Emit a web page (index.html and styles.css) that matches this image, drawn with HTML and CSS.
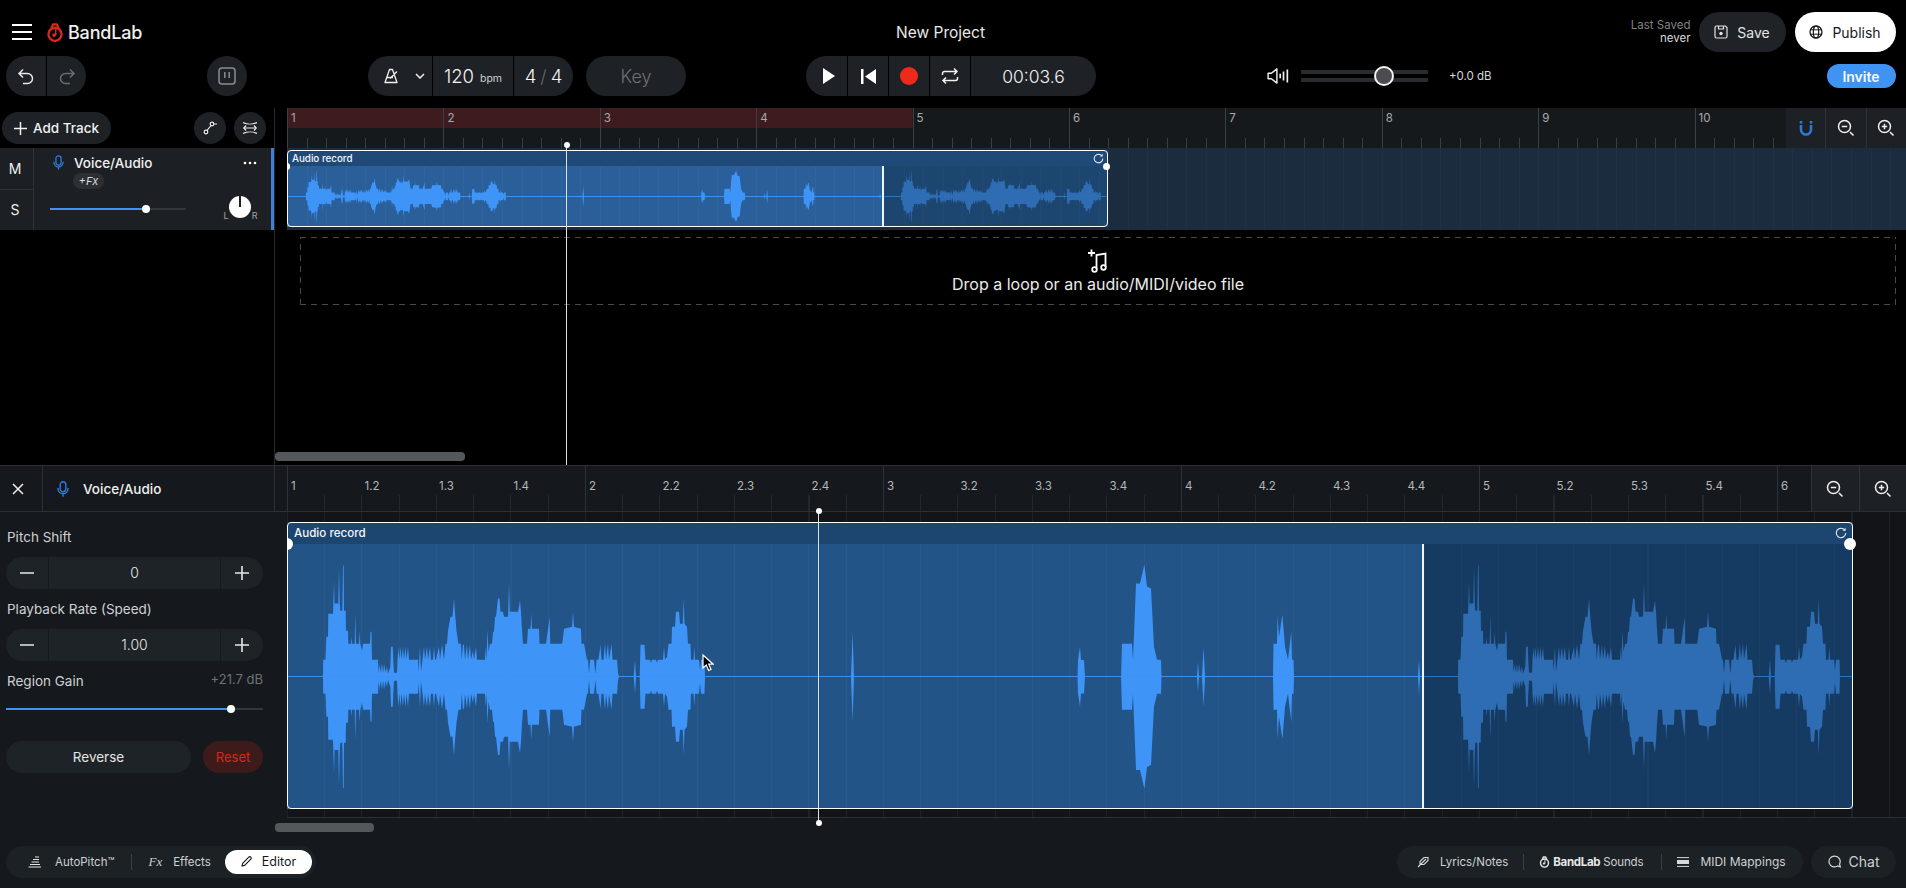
FILE: index.html
```html
<!DOCTYPE html>
<html lang="en">
<head>
<meta charset="utf-8">
<title>BandLab Studio</title>
<link rel="stylesheet" href="styles.css">
</head>
<body>
<svg class="defs" xmlns="http://www.w3.org/2000/svg">
  <symbol id="wave" viewBox="0 -132.5 1135 265" preserveAspectRatio="none">
    <g id="halfwave">
      <polygon points="36,0 36.2,-17 38.5,-17 39.3,-40 41,-40 41.3,-63 46,-63 46.3,-72 47,-96 47.6,-72 48,-73 51.3,-73 52,-110 52.8,-73 53.3,-66 55.3,-66 56,-111 56.7,-111 57,-66 58.7,-66 59,-46 61,-46 61.3,-33 64,-33 64.5,-40 65,-33 67.7,-33 68.3,-63 69,-33 72,-33 72.7,-45 73.3,-33 75,-26 76,-33 83,-33 83.5,-45 84.5,-45 85,-17 91,-17 91.5,-4 92.5,-13 93.3,-4 94.3,-13 95,-4 96,-13 96.8,-4 97.7,-13 98.5,-4 100,-10 101,-3 103.3,-10 104,-30 105.800,-30 106.300,-16 107,-4 110,-4 110.500,-17 111.500,-30 112.300,-17 113.500,-30 114.500,-17 116,-30 117,-17 118.500,-30 119.500,-17 121,-30 122,-17 131,-17 131.500,-5 133,-30 134,-5 135.500,-17 137,-30 138,-17 140,-30 141,-17 143,-30 144,-17 146,-17 147,-30 148,-17 149,-17 152,-30 153,-17 155,-32 157,-17 158.500,-33 160,-33 161,-46 163.500,-60 165.500,-60 167,-78 168.300,-60 169.500,-46 171.500,-33 174,-33 174.700,-17 176,-32 177,-32 178,-17 180,-32 181,-17 183,-32 184,-17 186,-26 187,-17 189,-30 190,-17 198,-17 198.500,-30 199.500,-17 200.500,-47 201.500,-25 203,-33 205,-33 206,-45 207,-45 208,-60 209,-60 211,-78 212.500,-78 213.500,-65 216,-65 217,-60 221,-60 222,-93 222.800,-65 231,-65 233,-76 234,-65 235,-47 236,-33 240,-33 241,-48 243.500,-48 244.300,-63 245,-48 252,-48 252.500,-33 259,-33 262.700,-60 263.200,-33 275,-33 275.500,-35 277,-48 285,-50 286,-65 287,-50 294,-48 294.500,-33 297,-33 300,-17 301,-17 302,-3 303,-17 307,-17 308.500,-3 309.500,-17 311.500,-17 313.500,-32 314.500,-17 316.500,-17 318,-33 319,-17 321,-33 322,-17 324.500,-33 325.500,-17 330,-17 331,-4 332,0 346.700,0 348,-17 349,0 352.700,0 353.500,-32 357.500,-32 358.500,-17 363,-17 364,-14 365,-17 369,-17 370,-14 371,-17 376,-17 377,-30 378,-17 380,-20 381.500,-33 384.500,-33 385,-50 388,-50 389,-65 392,-65 393,-53 395.800,-53 396.700,-78 397.500,-53 400,-50 401,-33 403.500,-33 404,-17 406.500,-17 407.300,-30 408,-17 412,-17 413,-6 414,-17 417.500,-17 418,0"/>
      <polygon points="564,0 565.600,-45 567,0"/>
      <polygon points="790.500,0 791,-16.700 793,-30 794,-16.700 797,-16.700 798,0"/>
      <polygon points="834,0 835,-33 845,-33 846,-17 849,-93 853,-93 857.400,-112 860,-90 864,-88 867,-30 870,-17 874,-17 874.500,0"/>
      <polygon points="910,0 911,-15 912,0"/>
      <polygon points="915,0 916.600,-30 918,0"/>
      <polygon points="986,0 986.500,-33 990,-33 990.500,-62 992,-40 995.400,-62 998,-30 1001,-17 1004.300,-45 1005,-17 1006.500,-17 1007,0"/>
      <polygon points="1131,0 1132,-17 1133,0"/>
    </g>
    <use href="#halfwave" transform="scale(1 -1)"/>
  </symbol>
  <symbol id="mic" viewBox="0 0 12 16">
    <rect x="3.2" y="0.8" width="5.6" height="10" rx="2.8" fill="none" stroke="currentColor" stroke-width="1.4"/>
    <path d="M1 7.5c0 3.2 2.2 5.3 5 5.3s5-2.1 5-5.3M6 12.8v2.4" fill="none" stroke="currentColor" stroke-width="1.4" stroke-linecap="round"/>
  </symbol>
  <symbol id="zoomout" viewBox="0 0 18 18">
    <circle cx="7.5" cy="7.5" r="6" fill="none" stroke="currentColor" stroke-width="1.5"/>
    <path d="M4.8 7.5h5.4M13 13l3.5 3.5" fill="none" stroke="currentColor" stroke-width="1.5"/>
  </symbol>
  <symbol id="zoomin" viewBox="0 0 18 18">
    <circle cx="7.5" cy="7.5" r="6" fill="none" stroke="currentColor" stroke-width="1.5"/>
    <path d="M4.8 7.5h5.4M7.5 4.8v5.4M13 13l3.5 3.5" fill="none" stroke="currentColor" stroke-width="1.5"/>
  </symbol>
  <symbol id="refresh" viewBox="0 0 12 12">
    <path d="M9.8 3.2A4.7 4.7 0 1 0 10.7 6" fill="none" stroke="currentColor" stroke-width="1.1"/>
    <path d="M10.6 0.8v3H7.6z" fill="currentColor"/>
  </symbol>
  <symbol id="minus" viewBox="0 0 14 14"><path d="M0 7h14" stroke="currentColor" stroke-width="1.6"/></symbol>
  <symbol id="plus" viewBox="0 0 14 14"><path d="M0 7h14M7 0v14" stroke="currentColor" stroke-width="1.6"/></symbol>
  <symbol id="logo" viewBox="0 0 20 21">
    <circle cx="10" cy="12.500" r="7.300" fill="none" stroke="currentColor" stroke-width="2.600"/>
    <path d="M5.800 6.600L7.800 1.400h4.400l2 5.200" fill="none" stroke="currentColor" stroke-width="2.400" stroke-linejoin="round"/>
    <path d="M10.800 6v7.400" fill="none" stroke="currentColor" stroke-width="1.600"/>
    <circle cx="9" cy="13.400" r="2.100" fill="currentColor"/>
  </symbol>
</svg>

<div class="app">
  <header class="topbar">
    <svg class="i-burger" viewBox="0 0 20 16"><path d="M0 1h20M0 8h20M0 15h20" stroke="#fff" stroke-width="2"/></svg>
    <svg class="i-logo"><use href="#logo"/></svg>
    <span class="brand">BandLab</span>
    <span class="title">New Project</span>
    <div class="saved"><span class="saved-l">Last Saved</span><span class="saved-v">never</span></div>
    <button class="btn-save">
      <svg class="i-14" viewBox="0 0 14 14"><path d="M2.500 1h9L13 2.500v9a1.500 1.500 0 0 1-1.500 1.500h-9A1.500 1.500 0 0 1 1 11.500v-9A1.500 1.500 0 0 1 2.500 1z" fill="none" stroke="currentColor" stroke-width="1.200"/><path d="M4.500 1v3h5V1" fill="none" stroke="currentColor" stroke-width="1.200"/><circle cx="7" cy="8.500" r="1.700" fill="currentColor"/></svg>
      Save
    </button>
    <button class="btn-publish">
      <svg class="i-14" viewBox="0 0 14 14"><circle cx="7" cy="7" r="6" fill="none" stroke="currentColor" stroke-width="1.300"/><ellipse cx="7" cy="7" rx="2.700" ry="6" fill="none" stroke="currentColor" stroke-width="1.200"/><path d="M1.500 4.800h11M1.500 9.200h11" stroke="currentColor" stroke-width="1"/></svg>
      Publish
    </button>
  </header>

  <div class="toolbar">
    <div class="pill undo">
      <button class="seg s40"><svg class="i-18" viewBox="0 0 18 18"><path d="M6 2.500L2 6.500l4 4M2 6.500h8.500a5 5 0 0 1 0 10H6" fill="none" stroke="#e8e8e8" stroke-width="1.500"/></svg></button>
      <button class="seg s40"><svg class="i-18" viewBox="0 0 18 18"><path d="M12 2.500l4 4-4 4M16 6.500H7.500a5 5 0 0 0 0 10H12" fill="none" stroke="#6a6d70" stroke-width="1.500"/></svg></button>
    </div>
    <button class="pill round40 pause">
      <svg class="i-18" viewBox="0 0 18 18"><rect x="1" y="1" width="16" height="16" rx="3" fill="none" stroke="#8b8e91" stroke-width="1.500"/><path d="M6.800 5v6M11.200 5v6" stroke="#8b8e91" stroke-width="1.500"/></svg>
    </button>
    <div class="pill metro">
      <button class="seg metro-icon">
        <svg class="i-met" viewBox="0 0 16 16"><path d="M6 1.500h3l4.500 13h-12zM3.500 9.500h6M13.500 3.500L6.500 10.500" fill="none" stroke="#f0f0f0" stroke-width="1.300" stroke-linejoin="round"/></svg>
        <svg class="i-chev" viewBox="0 0 10 6"><path d="M1 1l4 4 4-4" fill="none" stroke="#f0f0f0" stroke-width="1.500"/></svg>
      </button>
      <div class="seg bpm"><span class="big">120</span><span class="unit">bpm</span></div>
      <div class="seg sig"><span class="big">4</span><span class="slash">/</span><span class="big">4</span></div>
    </div>
    <button class="pill key">Key</button>
    <div class="pill transport">
      <button class="seg s41 play"><svg class="i-play" viewBox="0 0 12 16"><path d="M0 0l12 8-12 8z" fill="#fff"/></svg></button>
      <button class="seg s41"><svg class="i-prev" viewBox="0 0 15 15"><path d="M0 0h2.500v15H0zM15 0v15L4 7.500z" fill="#fff"/></svg></button>
      <button class="seg s41"><span class="rec"></span></button>
      <button class="seg s41"><svg class="i-18" viewBox="0 0 18 18"><path d="M1.500 8V6.500a2 2 0 0 1 2-2h12M13 1.500l3 3-3 3M16.500 10v1.500a2 2 0 0 1-2 2h-12M5 10.500l-3 3 3 3" fill="none" stroke="#f0f0f0" stroke-width="1.500"/></svg></button>
      <div class="seg time">00:03.6</div>
    </div>
    <svg class="i-vol" viewBox="0 0 20 16"><path d="M1 5.500h3L9 1.500v13l-5-4H1z" fill="none" stroke="#f0f0f0" stroke-width="1.300" stroke-linejoin="round"/><path d="M12 6v4M15 4v8M18.500 2v12" stroke="#f0f0f0" stroke-width="1.500"/></svg>
    <div class="volume"><span class="vbar"></span><span class="vbar"></span><span class="vthumb"></span></div>
    <span class="db">+0.0 dB</span>
    <button class="btn-invite">Invite</button>
  </div>

  <section class="arrange">
    <aside class="trackcol">
      <div class="trackbar">
        <button class="add"><svg class="i-plus"><use href="#plus"/></svg>Add Track</button>
        <button class="round32 first"><svg class="i-14" viewBox="0 0 14 14"><circle cx="3" cy="11" r="1.800" fill="none" stroke="#eee" stroke-width="1.200"/><circle cx="9" cy="3" r="1.800" fill="none" stroke="#eee" stroke-width="1.200"/><path d="M4 9.500L8 4.500M10.800 3H14" stroke="#eee" stroke-width="1.200"/></svg></button>
        <button class="round32"><svg class="i-14" viewBox="0 0 14 14"><path d="M0 1.500c4 2 10 2 14 0M0 12.500c4-2 10-2 14 0M1 7h12" fill="none" stroke="#eee" stroke-width="1.200"/><path d="M3 4.500L.8 7 3 9.500M11 4.500L13.200 7 11 9.500" fill="none" stroke="#eee" stroke-width="1.200"/></svg></button>
      </div>
      <div class="track">
        <div class="ms"><button class="ms-b">M</button><button class="ms-b">S</button></div>
        <div class="track-main">
          <div class="track-head">
            <svg class="i-mic"><use href="#mic"/></svg>
            <span class="track-name">Voice/Audio</span>
            <svg class="i-dots" viewBox="0 0 14 4"><circle cx="2" cy="2" r="1.300" fill="#fff"/><circle cx="7" cy="2" r="1.300" fill="#fff"/><circle cx="12" cy="2" r="1.300" fill="#fff"/></svg>
          </div>
          <span class="fx-chip">+Fx</span>
          <div class="track-ctl">
            <div class="slider tslider"><span class="fill fill-track"></span><span class="thumb"></span></div>
            <div class="knob">
              <span class="knob-dial"></span>
              <span class="knob-l">L</span>
              <span class="knob-r">R</span>
            </div>
          </div>
        </div>
      </div>
    </aside>

    <div class="timeline">
      <div class="ruler">
        <div class="bars">
          <span class="bar">1</span><span class="bar">2</span><span class="bar">3</span><span class="bar">4</span><span class="bar">5</span><span class="bar">6</span><span class="bar">7</span><span class="bar">8</span><span class="bar">9</span><span class="bar">10</span>
        </div>
        <div class="tools">
          <button class="tool"><svg class="i-mag" viewBox="0 0 14 16"><path d="M2 5v4.500a5 5 0 0 0 10 0V5" fill="none" stroke="#2f78d2" stroke-width="2.600"/><path d="M.7 1h2.600v2.500H.7zM10.700 1h2.600v2.500h-2.600z" fill="#2f78d2"/></svg></button>
          <button class="tool"><svg class="i-18"><use href="#zoomout"/></svg></button>
          <button class="tool"><svg class="i-18"><use href="#zoomin"/></svg></button>
        </div>
      </div>
      <div class="lane">
        <div class="clip clip-top">
          <div class="clip-head"><span>Audio record</span><svg class="i-ref"><use href="#refresh"/></svg></div>
          <div class="clip-body">
            <div class="seg-a"><svg class="wave"><use href="#wave" width="100%" height="100%"/></svg></div>
            <div class="seg-b"><svg class="wave"><use href="#wave" width="100%" height="100%"/></svg></div>
          </div>
          <span class="handle-l"></span><span class="handle-r"></span>
        </div>
      </div>
      <div class="drop">
        <svg class="i-note" viewBox="0 0 24 24"><path d="M2 4h7M5.500 .5v7" stroke="#fff" stroke-width="1.800"/><path d="M10.500 20V6l9-1.500V18" fill="none" stroke="#fff" stroke-width="1.800"/><circle cx="8.500" cy="20.500" r="2.300" fill="none" stroke="#fff" stroke-width="1.800"/><circle cx="17.500" cy="18.500" r="2.300" fill="none" stroke="#fff" stroke-width="1.800"/></svg>
        <span>Drop a loop or an audio/MIDI/video file</span>
      </div>
      <div class="scroll scroll-top"></div>
    </div>
    <div class="playhead ph-top"></div>
  </section>

  <section class="editor">
    <div class="ed-head">
      <button class="ed-close"><svg class="i-x" viewBox="0 0 12 12"><path d="M1 1l10 10M11 1L1 11" stroke="#eee" stroke-width="1.500"/></svg></button>
      <div class="ed-name"><svg class="i-mic2"><use href="#mic"/></svg><span>Voice/Audio</span></div>
      <div class="beats">
        <span class="beat">1</span><span class="beat">1.2</span><span class="beat">1.3</span><span class="beat">1.4</span><span class="beat">2</span><span class="beat">2.2</span><span class="beat">2.3</span><span class="beat">2.4</span><span class="beat">3</span><span class="beat">3.2</span><span class="beat">3.3</span><span class="beat">3.4</span><span class="beat">4</span><span class="beat">4.2</span><span class="beat">4.3</span><span class="beat">4.4</span><span class="beat">5</span><span class="beat">5.2</span><span class="beat">5.3</span><span class="beat">5.4</span><span class="beat">6</span>
      </div>
      <div class="ed-tools">
        <button class="ed-tool"><svg class="i-18"><use href="#zoomout"/></svg></button>
        <button class="ed-tool"><svg class="i-18"><use href="#zoomin"/></svg></button>
      </div>
    </div>
    <div class="ed-body">
      <aside class="ed-side">
        <label class="lbl">Pitch Shift</label>
        <div class="stepper">
          <button class="st-b"><svg class="i-st"><use href="#minus"/></svg></button>
          <span class="st-v">0</span>
          <button class="st-b"><svg class="i-st"><use href="#plus"/></svg></button>
        </div>
        <label class="lbl">Playback Rate (Speed)</label>
        <div class="stepper">
          <button class="st-b"><svg class="i-st"><use href="#minus"/></svg></button>
          <span class="st-v">1.00</span>
          <button class="st-b"><svg class="i-st"><use href="#plus"/></svg></button>
        </div>
        <div class="gain-row"><label class="lbl">Region Gain</label><span class="gain-v">+21.7 dB</span></div>
        <div class="slider gslider"><span class="fill fill-gain"></span><span class="thumb"></span></div>
        <div class="side-btns">
          <button class="reverse">Reverse</button>
          <button class="reset">Reset</button>
        </div>
      </aside>
      <div class="ed-lane">
        <div class="clip clip-bot">
          <div class="clip-head"><span>Audio record</span><svg class="i-ref"><use href="#refresh"/></svg></div>
          <div class="clip-body">
            <div class="seg-a"><svg class="wave"><use href="#wave" width="100%" height="100%"/></svg></div>
            <div class="seg-b"><svg class="wave"><use href="#wave" width="100%" height="100%"/></svg></div>
          </div>
          <span class="handle-l"></span><span class="handle-r"></span>
        </div>
      </div>
    </div>
    <div class="scroll scroll-bot"></div>
    <footer class="ed-foot">
      <div class="fpill fleft">
        <button class="ftab t-auto"><svg class="i-auto" viewBox="0 0 14 12"><path d="M7 1h4M5 3.500h6M3.500 6H11M2 8.500h10M.5 11H13" stroke="#e4e4e4" stroke-width="1.200"/></svg>AutoPitch™</button>
        <span class="fdiv"></span>
        <button class="ftab t-fx"><i class="fx">Fx</i>Effects</button>
        <button class="ftab t-edit"><svg class="i-pen" viewBox="0 0 12 12"><path d="M1 11l.8-3L8.500 1.300a1.400 1.400 0 0 1 2.200 2.200L4 10.200z" fill="none" stroke="#111" stroke-width="1.200" stroke-linejoin="round"/></svg>Editor</button>
      </div>
      <div class="fpill fright">
        <button class="ftab t-lyr"><svg class="i-12" viewBox="0 0 12 12"><path d="M1 11L9 3M3 9V5.500L7 1.500h4v3L7 8.500H3.500" fill="none" stroke="#d8d8d8" stroke-width="1.100"/></svg>Lyrics/Notes</button>
        <span class="fdiv d2"></span>
        <button class="ftab t-snd"><svg class="i-12b"><use href="#logo"/></svg><b>BandLab</b>Sounds</button>
        <span class="fdiv d3"></span>
        <button class="ftab t-midi"><svg class="i-midi" viewBox="0 0 12 10"><path d="M0 .6h12M0 9.400h12" stroke="#d8d8d8" stroke-width="1"/><rect x="0" y="3" width="12" height="4" fill="#d8d8d8"/></svg>MIDI Mappings</button>
      </div>
      <button class="fpill fchat"><svg class="i-chat" viewBox="0 0 12 12"><path d="M6 1a5 5 0 1 0 2.800 9.100L11.500 11l-.9-2.600A5 5 0 0 0 6 1z" fill="none" stroke="#d8d8d8" stroke-width="1.100"/></svg>Chat</button>
    </footer>
    <div class="playhead ph-bot"></div>
    <svg class="cursor" viewBox="0 0 12 18"><path d="M1 1v13l3.300-3 2.300 5.500 2.400-1-2.300-5.300h4.500z" fill="#000" stroke="#fff" stroke-width="1.200"/></svg>
  </section>
</div>
</body>
</html>
```

FILE: styles.css
```css
* { box-sizing: border-box; }
html, body { margin: 0; height: 100%; background: #000; }
body { font-family: "Inter", "Lato", "Liberation Sans", sans-serif; color: #f0f0f0; overflow: hidden; }
button { font: inherit; color: inherit; background: none; border: 0; padding: 0; display: flex; align-items: center; justify-content: center; }
svg { display: block; flex: none; }
.defs { display: none; }

.app { width: 1906px; height: 888px; display: flex; flex-direction: column; overflow: hidden; }

/* top bar */
.topbar { height: 56px; display: flex; align-items: center; padding: 8px 10.5px 0 12px; }
.i-burger { width: 20px; height: 16px; }
.i-logo { width: 18px; height: 19px; margin-left: 14px; color: #d9291c; }
.brand { font-size: 18px; font-weight: 500; margin-left: 4px; width: 76px; letter-spacing: -.2px; }
.title { margin-left: 752px; font-size: 15.5px; color: #e8e8e8; width: 92px; white-space: nowrap; }
.saved { margin-left: auto; display: flex; flex-direction: column; align-items: flex-end; font-size: 11.5px; line-height: 13px; }
.saved-l { color: #808386; }
.saved-v { color: #d8d8d8; }
.btn-save, .btn-publish { height: 40px; border-radius: 20px; gap: 9px; font-size: 14px; }
.btn-save { width: 87px; margin-left: 8px; background: #1f2327; color: #e4e4e4; }
.btn-publish { width: 101px; margin-left: 9px; background: #fff; color: #16181b; }
.i-14 { width: 14px; height: 14px; }

/* toolbar */
.toolbar { height: 52px; padding-bottom: 12px; display: flex; align-items: center; padding-left: 6px; padding-right: 10.5px; }
.pill { height: 40px; background: #1e2226; border-radius: 20px; display: flex; align-items: stretch; overflow: hidden; }
.seg { display: flex; align-items: center; justify-content: center; border-left: 1px solid #000; }
.seg:first-child { border-left: 0; }
.s40 { width: 40px; }
.s41 { width: 41px; }
.play { padding-left: 5px; }
.i-18 { width: 18px; height: 18px; color: #f0f0f0; }
.round40 { width: 40px; align-items: center; }
.pause { margin-left: 121px; }
.metro { margin-left: 121px; width: 205px; }
.metro-icon { width: 64px; gap: 15px; padding-left: 8px; }
.i-met { width: 17px; height: 16px; }
.i-chev { width: 10px; height: 6px; }
.bpm { width: 81px; gap: 6px; align-items: center; }
.big { font-size: 18.5px; font-weight: 300; color: #f4f4f4; }
.unit { font-size: 10.5px; color: #d0d0d0; margin-top: 4px; }
.sig { flex: 1; gap: 4px; }
.slash { color: #666; font-size: 18px; font-weight: 300; }
.key { width: 100px; margin-left: 13px; align-items: center; justify-content: center; color: #6e7174; font-size: 18px; font-weight: 300; }
.transport { margin-left: 120px; width: 290px; }
.i-play { width: 12px; height: 16px; }
.i-prev { width: 15px; height: 15px; }
.rec { width: 18px; height: 18px; border-radius: 50%; background: #ee2a1b; }
.time { flex: 1; font-size: 17.5px; font-weight: 300; color: #f4f4f4; }
.i-vol { width: 22px; height: 18px; margin-left: 171px; }
.volume { position: relative; width: 127px; height: 12px; margin-left: 12px; display: flex; flex-direction: column; justify-content: space-between; }
.vbar { height: 4px; background: #2a2d30; border-radius: 1px; }
.vthumb { position: absolute; left: 73px; top: -4px; width: 20px; height: 20px; border-radius: 50%; background: #4a4c4f; border: 2px solid #f4f4f4; }
.db { font-size: 11.5px; margin-left: 21px; color: #d8d8d8; white-space: nowrap; }
.btn-invite { margin-left: auto; width: 69px; height: 24px; border-radius: 12px; background: #3f93f3; color: #f4f8ff; font-size: 14px; font-weight: 600; }

/* arrange */
.arrange { position: relative; height: 357px; display: flex; }
.trackcol { width: 275px; flex: none; border-right: 1px solid #26292d; }
.trackbar { height: 40px; display: flex; align-items: center; padding-left: 2px; }
.add { width: 109px; height: 32px; border-radius: 16px; background: #1e2226; font-size: 13.5px; font-weight: 500; gap: 6px; white-space: nowrap; margin-right: 83px; }
.i-plus { width: 13px; height: 13px; color: #f0f0f0; }
.round32 { width: 32px; height: 32px; border-radius: 50%; background: #1e2226; margin-right: 8px; }
.track { height: 82px; display: flex; background: #1c2024; border-right: 3px solid #3f7fd4; width: 274px; }
.ms { width: 34px; border-right: 1px solid #2f3337; display: flex; flex-direction: column; }
.ms-b { flex: 1; font-size: 14px; font-weight: 400; color: #f0f0f0; padding-right: 3px; }
.ms-b:first-child { border-bottom: 1px solid #2f3337; }
.track-main { flex: 1; padding: 6px 14px 0 16px; }
.track-head { display: flex; align-items: center; height: 17px; }
.i-mic { width: 11px; height: 15px; margin-left: 3px; color: #2f7cdc; }
.track-name { font-size: 13.5px; font-weight: 500; margin-left: 10px; white-space: nowrap; }
.i-dots { width: 14px; height: 4px; margin-left: auto; }
.fx-chip { display: block; width: 31px; height: 16px; margin: 2px 0 0 23px; border-radius: 8px; background: #2c3034; font-size: 11px; font-style: italic; line-height: 16px; text-align: center; color: #d8d8d8; }
.track-ctl { display: flex; align-items: center; margin-top: 7px; }
.slider { position: relative; height: 2px; background: #34373b; border-radius: 1px; }
.fill { display: block; height: 100%; background: #3f93f3; }
.thumb { position: absolute; top: -3px; width: 8px; height: 8px; border-radius: 50%; background: #fff; }
.tslider { width: 136px; }
.fill-track { width: 96px; }
.tslider .thumb { left: 92px; }
.knob { position: relative; width: 32px; height: 26px; margin-left: 37.5px; }
.knob-dial { position: absolute; left: 5px; top: 0; width: 22px; height: 22px; border-radius: 50%; background: #fff; }
.knob-dial::after { content: ""; position: absolute; left: 10px; top: 0; width: 2px; height: 11px; background: #1c2024; }
.knob-l, .knob-r { position: absolute; top: 14px; font-size: 9px; color: #a0a3a6; }
.knob-l { left: 0; }
.knob-r { right: -2px; }

.timeline { flex: 1; min-width: 0; display: flex; flex-direction: column; }
.ruler { height: 40px; display: flex; margin-left: 12px; }
.bars { flex: 1; display: flex; overflow: hidden; background:
  linear-gradient(#3e1b1e, #3e1b1e) 0 0 / 625.6px 20px no-repeat,
  repeating-linear-gradient(90deg, #3a3d41 0 1px, transparent 1px 19.55px) 0 100% / 100% 10px no-repeat,
  #16191c; }
.bar { flex: none; width: 156.4px; padding: 3px 0 0 3px; font-size: 11.5px; line-height: 14px; color: #a8abad; border-left: 1px solid #3c3f43; }
.tools { width: 120px; display: flex; background: #1d2125; flex: none; }
.tool { flex: 1; border-left: 1px solid #2e3236; color: #f0f0f0; }
.tool:first-child { border-left: 0; }
.i-mag { width: 14px; height: 16px; }
.lane { height: 82px; margin-left: 12px; padding-top: 2px; background:
  repeating-linear-gradient(90deg, rgba(255,255,255,.025) 0 1px, transparent 1px 19.55px),
  #1a2c3d; }

/* clips */
.clip { position: relative; display: flex; flex-direction: column; }
.clip::after { content: ""; position: absolute; inset: 0; border: 1.5px solid #fff; border-radius: 4px; pointer-events: none; }
.clip-head { display: flex; align-items: center; justify-content: space-between; background: #1f4a78; border-radius: 4px 4px 0 0; color: #f4f6f8; white-space: nowrap; }
.clip-body { flex: 1; min-height: 0; display: flex; }
.seg-a { overflow: hidden; color: #3f94f8; background-color: #235589; background-image:
  repeating-linear-gradient(90deg, rgba(255,255,255,.03) 0 1px, transparent 1px var(--step)),
  linear-gradient(#3a8ff0, #3a8ff0); }
.seg-b { overflow: hidden; flex: 1; color: #2e6db3; border-left: 2px solid #f0f4f8; background-color: #163b62; background-image:
  repeating-linear-gradient(90deg, rgba(255,255,255,.025) 0 1px, transparent 1px var(--step)),
  linear-gradient(#2f72bd, #2f72bd); }
.seg-a, .seg-b { background-repeat: repeat, no-repeat; background-position: 0 0, 0 50%; background-size: auto, 100% 1px; }
.seg-b .wave { margin-left: -2px; }
.wave { height: 100%; fill: currentColor; }
.handle-l, .handle-r { position: absolute; background: #fff; z-index: 1; }

.clip-top { --step: 19.55px; width: 820.7px; height: 76.7px; }
.clip-top .clip-head { height: 16px; padding: 0 4px 0 5px; font-size: 9.8px; font-weight: 500; }
.clip-top .seg-a { width: 594.6px; background-color: #2a5f9a; }
.clip-top .seg-b { background-color: #1c4570; }
.clip-top .wave { width: 594.6px; }
.i-ref { width: 11px; height: 11px; color: #e8eef4; }
.clip-top .handle-l { left: 0; top: 12.5px; width: 3px; height: 7px; border-radius: 0 4px 4px 0; }
.clip-top .handle-r { right: -2px; top: 12.5px; width: 7px; height: 7px; border-radius: 50%; }

.drop { height: 68px; margin: 6.5px 10px 0 25px; display: flex; flex-direction: column; align-items: center; padding-top: 12px; font-size: 16px; color: #ececec; background:
  repeating-linear-gradient(90deg, #474a4d 0 6px, transparent 6px 11px) 0 0 / 100% 1px no-repeat,
  repeating-linear-gradient(90deg, #474a4d 0 6px, transparent 6px 11px) 0 100% / 100% 1px no-repeat,
  repeating-linear-gradient(0deg, #474a4d 0 6px, transparent 6px 11px) 0 0 / 1px 100% no-repeat,
  repeating-linear-gradient(0deg, #474a4d 0 6px, transparent 6px 11px) 100% 0 / 1px 100% no-repeat; }
.i-note { width: 24px; height: 24px; margin-bottom: 1px; }
.scroll { background: #55585b; border-radius: 4px; height: 9px; }
.scroll-top { width: 190px; margin-top: auto; margin-bottom: 4.5px; }

.playhead { position: absolute; width: 1px; background: #dfe2e4; z-index: 3; }
.playhead::before, .playhead.ph-bot::after { content: ""; position: absolute; left: -2.5px; width: 6px; height: 6px; border-radius: 50%; background: #fff; }
.playhead::before { top: -3px; }
.ph-top { left: 566px; top: 37px; bottom: 0; }

/* editor */
.editor { position: relative; height: 423px; background: #15181c; border-top: 1px solid #2c2f33; display: flex; flex-direction: column; }
.ed-head { height: 46.3px; flex: none; display: flex; border-bottom: 1px solid #2c2f33; }
.ed-close { width: 43px; border-right: 1px solid #2c2f33; padding-right: 6px; }
.i-x { width: 12px; height: 12px; }
.ed-name { width: 232px; border-right: 1px solid #2c2f33; display: flex; align-items: center; font-size: 13.5px; font-weight: 500; padding-left: 14px; gap: 14px; white-space: nowrap; }
.i-mic2 { width: 12px; height: 16px; color: #2f7cdc; }
.beats { flex: 1; display: flex; overflow: hidden; margin-left: 12px; min-width: 0; background:
  repeating-linear-gradient(90deg, #24272b 0 1px, transparent 1px 37.25px) 0 100% / 100% 16px no-repeat; }
.beat { flex: none; width: 74.5px; padding: 13px 0 0 3px; font-size: 11.5px; line-height: 14px; color: #b6b9bb; }
.beat:nth-child(4n+1) { border-left: 1px solid #2e3135; }
.ed-tools { width: 95px; flex: none; display: flex; background: #1d2125; }
.ed-tool { flex: 1; border-left: 1px solid #2e3236; color: #f0f0f0; }
.ed-body { height: 306px; flex: none; display: flex; }
.ed-side { width: 287px; flex: none; padding: 17px 24px 0 6px; }
.lbl { display: block; font-size: 13.5px; line-height: 16px; color: #d0d2d4; padding-left: 1px; }
.stepper { height: 32px; margin: 12px 0; background: #1e2327; border-radius: 16px; display: flex; overflow: hidden; }
.st-b { width: 42px; flex: none; }
.st-v { flex: 1; border: solid #15181c; border-width: 0 1px; text-align: center; line-height: 32px; font-size: 14px; font-weight: 300; color: #e8e8e8; }
.i-st { width: 14px; height: 14px; color: #e8e8e8; }
.gain-row { display: flex; justify-content: space-between; }
.gain-v { font-size: 13px; line-height: 12px; color: #6f7275; }
.gslider { margin-top: 19px; }
.fill-gain { width: 225px; }
.gslider .thumb { left: 221px; }
.side-btns { display: flex; gap: 12px; margin-top: 31px; }
.reverse { flex: 1; height: 32px; border-radius: 16px; background: #1e2327; font-size: 13.5px; color: #e4e4e4; }
.reset { width: 60px; height: 32px; border-radius: 16px; background: #3d1b1b; font-size: 13px; color: #cf2c1e; }
.ed-lane { flex: 1; min-width: 0; padding-top: 10px; border-bottom: 1px solid #2c2f33; background:
  repeating-linear-gradient(90deg, #1e2125 0 1px, transparent 1px 37.25px),
  #121417; }
.clip-bot { --step: 37.25px; width: 1565.5px; height: 287px; }
.clip-bot .clip-head { height: 21.5px; padding: 0 6px 0 7px; font-size: 11.6px; font-weight: 500; background: #1c4570; }
.clip-bot .seg-a { width: 1135px; background-color: #225488; }
.clip-bot .wave { width: 1135px; }
.clip-bot .i-ref { width: 12px; height: 12px; }
.clip-bot .handle-l { left: 0; top: 15.5px; width: 6px; height: 12px; border-radius: 0 6px 6px 0; }
.clip-bot .handle-r { right: -3px; top: 15.5px; width: 12px; height: 12px; border-radius: 50%; }
.scroll-bot { flex: none; width: 99px; margin: 4.5px 0 0 275px; }
.ed-foot { display: flex; align-items: flex-start; margin-top: 14px; padding: 0 10px 0 6px; }
.fpill { height: 32px; border-radius: 16px; background: #1c2125; display: flex; align-items: center; font-size: 11.5px; color: #cfd1d3; position: relative; }
.fleft { width: 310px; }
.fright { width: 406px; margin-left: auto; }
.fchat { width: 85px; margin-left: 8px; gap: 8px; font-size: 14px; }
.ftab { white-space: nowrap; }
.fdiv { width: 1px; height: 16px; background: #3c4044; }
.t-auto { margin-left: 22px; gap: 13px; }
.i-auto { width: 14px; height: 12px; }
.fleft .fdiv { margin-left: 17px; }
.t-fx { margin-left: 16px; gap: 11px; }
.fx { font-family: "Liberation Serif", serif; font-size: 13px; }
.t-edit { position: absolute; left: 219px; top: 4px; width: 87px; height: 24px; border-radius: 12px; background: #fff; color: #16181b; gap: 10px; font-size: 12.5px; }
.i-pen { width: 11px; height: 11px; }
.t-lyr { margin-left: 20px; gap: 11px; }
.i-12 { width: 12px; height: 12px; }
.d2 { margin-left: 15px; }
.t-snd { margin-left: 15px; gap: 3px; letter-spacing: -.15px; }
.i-12b { width: 11px; height: 12px; color: #e8e8e8; }
.t-snd b { font-weight: 700; color: #e8e8e8; letter-spacing: -.3px; }
.d3 { margin-left: 18px; }
.t-midi { margin-left: 15px; gap: 11px; font-size: 12px; }
.i-midi { width: 12px; height: 10px; }
.i-chat { width: 13px; height: 13px; }
.ph-bot { left: 818px; top: 45px; height: 312px; }
.playhead.ph-bot::after { bottom: -3px; }
.cursor { position: absolute; left: 702px; top: 188px; width: 12px; height: 18px; z-index: 4; }
```
